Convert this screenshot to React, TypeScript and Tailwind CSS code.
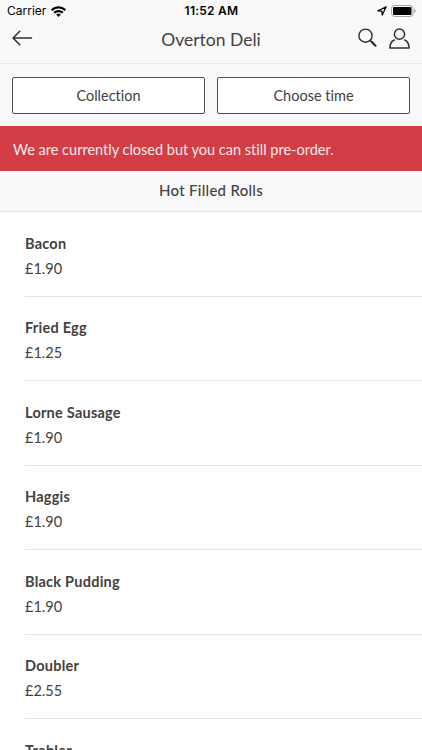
// Menu screen: lists the items of one section, with collection and time pickers.

import { useState } from "react";

type MenuItem = {
  name: string;
  price: number;
};

const ITEMS: MenuItem[] = [
  { name: "Bacon", price: 1.9 },
  { name: "Fried Egg", price: 1.25 },
  { name: "Lorne Sausage", price: 1.9 },
  { name: "Haggis", price: 1.9 },
  { name: "Black Pudding", price: 1.9 },
  { name: "Doubler", price: 2.55 },
  { name: "Trebler", price: 2.9 },
];

function StatusBar() {
  return (
    <div className="grid h-[22px] grid-cols-3 items-center pl-[7px] pr-[6px] font-['Inter','Liberation_Sans',sans-serif] text-xs text-black">
      <div className="flex items-center gap-[5px]">
        <span>Carrier</span>
        <svg width="15" height="11" viewBox="0 0 15 11" fill="none" stroke="currentColor" strokeWidth="2.2">
          <path d="M.7 4.1a9.7 9.7 0 0 1 13.6 0" />
          <path d="M3.2 6.8a6.1 6.1 0 0 1 8.6 0" />
          <path d="M7.5 11 5.1 8.6a3.4 3.4 0 0 1 4.8 0Z" fill="currentColor" stroke="none" />
        </svg>
      </div>
      <span className="text-center font-semibold tracking-[0.25px]">11:52 AM</span>
      <div className="flex items-center justify-end gap-1">
        <svg width="10" height="10" viewBox="0 0 10 10" fill="none" stroke="currentColor" strokeWidth="1.2" strokeLinejoin="round">
          <path d="M9.1.9.9 4.8l4 .3.3 4Z" />
        </svg>
        <svg width="25" height="12" viewBox="0 0 25 12">
          <rect x=".5" y=".5" width="21.5" height="11" rx="3" fill="none" stroke="#a5a5a5" />
          <rect x="2" y="2" width="18.5" height="8" rx="1" />
          <path d="M23.2 4v4c.9-.4 1.4-1.1 1.4-2s-.5-1.6-1.4-2Z" fill="#a5a5a5" />
        </svg>
      </div>
    </div>
  );
}

function Header() {
  return (
    <div className="grid h-[41px] grid-cols-[60px_1fr_60px] items-center px-3 pb-[9px]">
      <button aria-label="Back" className="justify-self-start">
        <svg width="21" height="16" viewBox="0 0 21 16" fill="none" stroke="#332f2d" strokeWidth="1.5" strokeLinecap="round" strokeLinejoin="round">
          <path d="M19.5 8H1M7.8 1.2 1 8l6.800 6.800" />
        </svg>
      </button>
      <h1 className="pt-1 text-center text-[17.5px]">Overton Deli</h1>
      <div className="flex items-center justify-end gap-3">
        <button aria-label="Search">
          <svg width="19" height="20" viewBox="0 0 19 20" fill="none" stroke="#332f2d" strokeLinecap="round">
            <circle cx="7.5" cy="7.7" r="6.6" strokeWidth="1.4" />
            <path d="m12.200 12.400 1.500 1.500" strokeWidth="1.5" />
            <path d="m13.900 14.100 3.600 3.600" strokeWidth="2.200" />
          </svg>
        </button>
        <button aria-label="Account">
          <svg width="21" height="21" viewBox="0 0 21 21" fill="none" stroke="#332f2d" strokeWidth="1.5" strokeLinecap="round" strokeLinejoin="round">
            <circle cx="10.5" cy="6.2" r="5.1" />
            <path d="M5.300 12C2.600 13.200 1 16 .9 19.900h19.200c-.1-3.900-1.700-6.700-4.400-7.900" />
          </svg>
        </button>
      </div>
    </div>
  );
}

function PickerButton({ label }: { label: string }) {
  return (
    <button className="h-[37px] flex-1 rounded-[2px] border border-[#504c4a] bg-white pt-px text-[14.5px]">
      {label}
    </button>
  );
}

function MenuRow({ item }: { item: MenuItem }) {
  return (
    <li className="ml-[25px] h-[84.5px] border-b border-[#e4e4e4] pt-[19.5px]">
      <h3 className="text-[14.5px] leading-6 font-bold tracking-[0.24px]">{item.name}</h3>
      <p className="text-[14.5px] leading-[26px]">£{item.price.toFixed(2)}</p>
    </li>
  );
}

export default function App() {
  const [items] = useState(ITEMS);

  return (
    <div className="h-[750px] overflow-hidden bg-white font-['Lato','Liberation_Sans',sans-serif] text-[#444140] [font-variant-ligatures:none]">
      <header className="h-16 border-b border-[#e9e9e9] bg-[#f9f9f9]">
        <StatusBar />
        <Header />
      </header>

      <div className="flex h-[62px] gap-3 bg-[#f9f9f9] px-3 pt-[12.5px]">
        <PickerButton label="Collection" />
        <PickerButton label="Choose time" />
      </div>

      <div className="flex h-[45px] items-center bg-[#d33d45] px-[13px] pt-0.5 text-[14.5px] text-[#fbe9ea]">
        We are currently closed but you can still pre-order.
      </div>

      <h2 className="h-[41px] border-b border-[#e4e4e4] bg-[#f9f9f9] text-center text-[15px] leading-[39px] font-medium tracking-[0.28px]">
        Hot Filled Rolls
      </h2>

      <ul>
        {items.map((item) => (
          <MenuRow key={item.name} item={item} />
        ))}
      </ul>
    </div>
  );
}
